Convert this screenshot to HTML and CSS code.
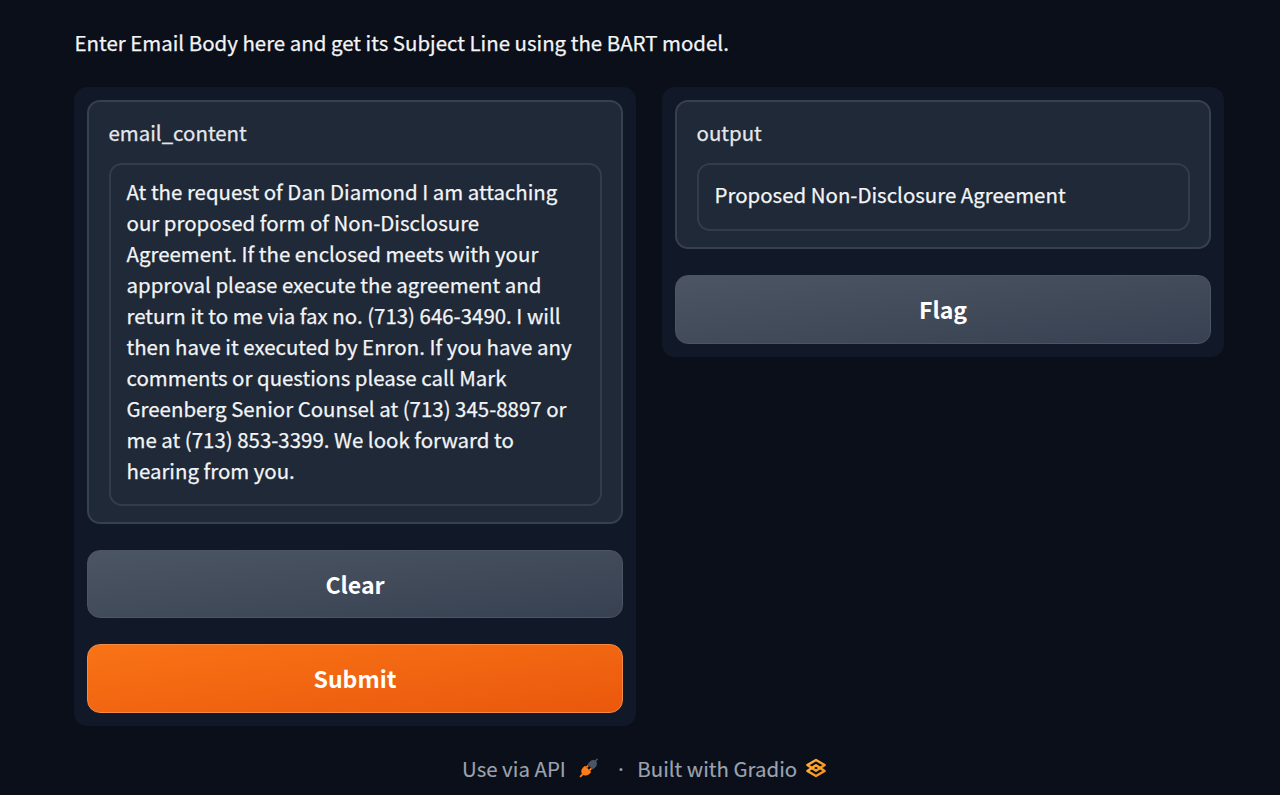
FILE: index.html
```
<!DOCTYPE html>
<html lang="en">
<head>
<meta charset="utf-8">
<title>Email Subject Line</title>
<link rel="stylesheet" href="styles.css">
</head>
<body>
<main class="app">
  <p class="description">Enter Email Body here and get its Subject Line using the BART model.</p>
  <div class="columns">
    <section class="panel">
      <div class="card">
        <label class="label">email_content</label>
        <div class="field field-input">At the request of Dan Diamond I am attaching<br>our proposed form of Non-Disclosure<br>Agreement. If the enclosed meets with your<br>approval please execute the agreement and<br>return it to me via fax no. (713) 646-3490. I will<br>then have it executed by Enron. If you have any<br>comments or questions please call Mark<br>Greenberg Senior Counsel at (713) 345-8897 or<br>me at (713) 853-3399. We look forward to<br>hearing from you.</div>
      </div>
      <button class="button">Clear</button>
      <button class="button primary">Submit</button>
    </section>
    <section class="panel">
      <div class="card">
        <label class="label">output</label>
        <div class="field field-output">Proposed Non-Disclosure Agreement</div>
      </div>
      <button class="button">Flag</button>
    </section>
  </div>
  <footer class="footer">
    <span class="api">Use via API</span>
    <svg class="plug" viewBox="0 0 20 20">
      <path d="M18.2 1.2 16 3.4" stroke="#4b5563" stroke-width="1.5" stroke-linecap="round"/>
      <path d="M8.4 6.2 11.2 3.2Q14.3 1 17 3 19 5.8 16.6 9L13.8 11.6Z" fill="#4b5563"/>
      <path d="M3.7 16.3 1.6 18.4" stroke="#f97316" stroke-width="2" stroke-linecap="round"/>
      <path d="M6 7.8 12.2 14 10.4 16Q6.6 18.8 3.4 16.6 .8 13.2 3.8 9.8Z" fill="#ff7c16"/>
      <path d="M7.4 9.4 9.2 7.6M10.4 12.4 12.4 10.4" stroke="#ff7c16" stroke-width="1.9"/>
    </svg>
    <span class="dot">·</span>
    <span class="built">Built with Gradio</span>
    <svg class="logo" viewBox="0 0 22 20">
      <defs><linearGradient id="amber" x1="0" y1="0" x2="1" y2="1"><stop stop-color="#ffb53e"/><stop offset="1" stop-color="#f98b16"/></linearGradient></defs>
      <g fill="none" stroke="url(#amber)" stroke-width="2.5" stroke-linejoin="round">
        <path d="M11 2 19.6 7 11 12.8 2.4 7Z"/>
        <path d="M11 7.2 19.6 13 11 18 2.4 13Z"/>
      </g>
    </svg>
  </footer>
</main>
</body>
</html>
```
FILE: styles.css
```
* { box-sizing: border-box; }
body {
  margin: 0;
  height: 795px;
  overflow: hidden;
  background: #0b0f19;
  color: #f3f4f6;
  font: 20.46px/31px "Noto Sans CJK JP", "Noto Sans", sans-serif;
  -webkit-text-stroke: 0.25px currentColor;
}
.app { padding: 27px 56px 0 74px; }
.description { margin: 0 0 29px; padding-left: 0.5px; white-space: nowrap; }
.columns { display: grid; grid-template-columns: 562px 562px; gap: 26px; align-items: start; }
.panel {
  display: flex;
  flex-direction: column;
  gap: 26px;
  padding: 13px;
  border-radius: 13px;
  background: #111827;
}
.card {
  padding: 15px 19.5px 16px;
  border: 2px solid #36414f;
  border-radius: 13px;
  background: #1f2937;
}
.label { display: block; height: 31px; margin-bottom: 15px; color: #e5e7eb; }
.field {
  border: 2px solid #323d4b;
  border-radius: 13px;
  padding: 11px 16px 0;
  white-space: nowrap;
}
.field-input { height: 342.5px; }
.field-output { height: 68px; padding-top: 14px; }
.button {
  height: 68.5px;
  padding: 1px 0 0;
  border: 1px solid #4b5563;
  border-radius: 13px;
  background: linear-gradient(to bottom right, #4b5563, #374151);
  color: #fff;
  font: bold 23.1px/31px "Noto Sans CJK JP", "Noto Sans", sans-serif;
  -webkit-text-stroke: 0;
}
.primary { border-color: #f48a45; background: linear-gradient(to bottom right, #f97316, #ea580c); }
.footer { display: flex; align-items: center; height: 31px; margin: 27px 0 0 388px; color: #9ca3af; white-space: nowrap; -webkit-text-stroke: 0.15px currentColor; }
.plug { width: 20px; height: 20px; margin-left: 13px; }
.dot { margin: 0 10.5px 0 16.5px; }
.logo { width: 22px; height: 20px; margin-left: 8px; }
```
